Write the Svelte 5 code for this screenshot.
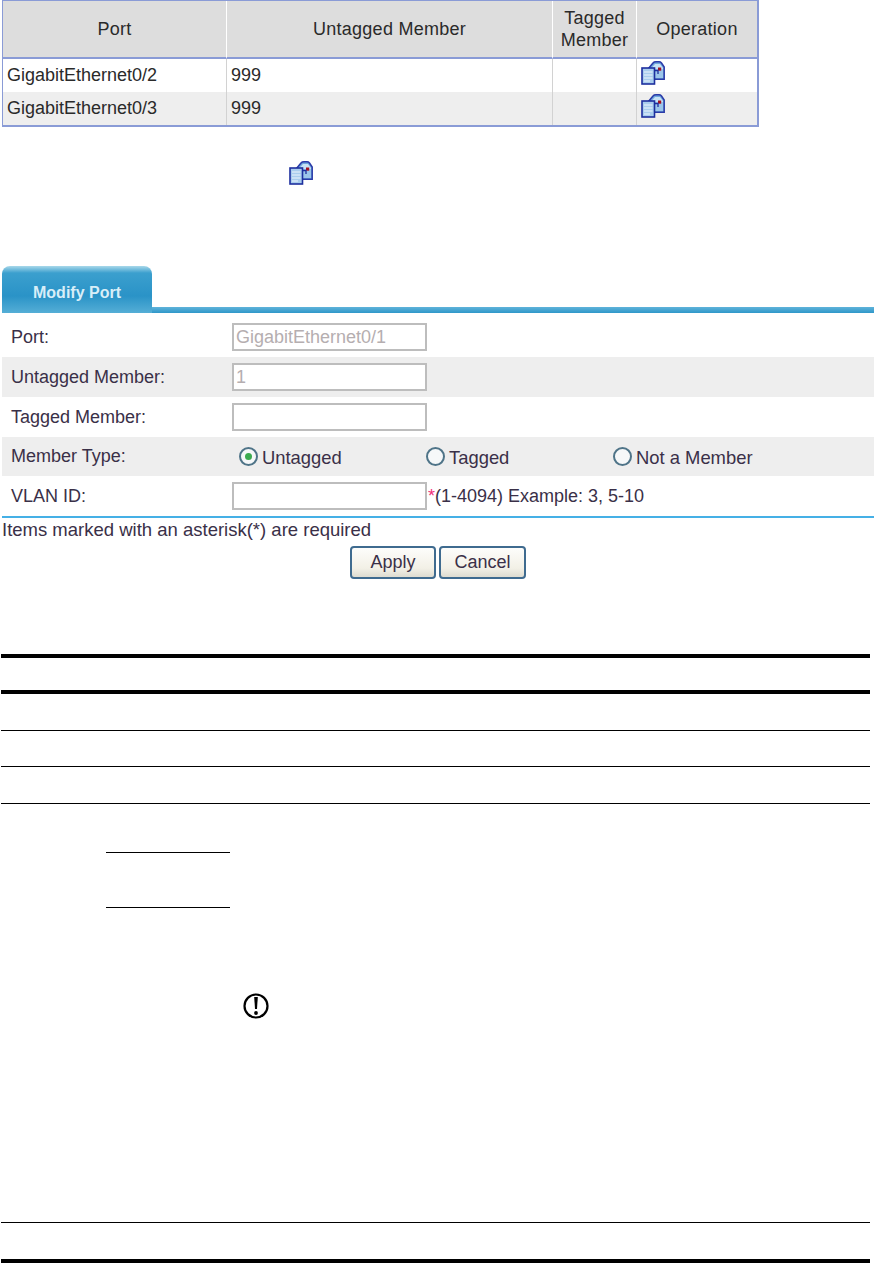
<script>
  const ports = ['GigabitEthernet0/2', 'GigabitEthernet0/3'];
  const types = [
    { label: 'Untagged', checked: true },
    { label: 'Tagged', checked: false },
    { label: 'Not a Member', checked: false }
  ];
  const ruleGaps = [32, 36, 35, 36];
</script>

{#snippet opIcon()}
  <svg class="op-icon" width="24" height="24" viewBox="0 0 24 24">
    <path d="M7 8 L12 2 Q13 .8 15 .8 H18 Q19.5 .8 20.5 2 L23.2 6 V18.2 H12 V8 Z" fill="#6ea6dc" stroke="#2a3aa8" stroke-width="1.5"/>
    <path d="M10 7.5 L14 3 H19 L22 7 V8 H10 Z" fill="#c6e2f5"/>
    <rect x="10" y="8" width="12" height="9" fill="#9cc6ea"/>
    <rect x="17" y="6.5" width="3.2" height="3.2" fill="#a80f1e"/>
    <rect x="1" y="7" width="12.5" height="16" fill="#a9cdee" stroke="#1d2f9e" stroke-width="1.6"/>
    <path d="M3 11h8.500M3 14h8.500M3 17h8.500M3 20h6" stroke="#eef6fc" stroke-width="1.2"/>
    <path d="M13.500 9.500h3.500v3.500" fill="none" stroke="#1d2f9e" stroke-width="1.3"/>
  </svg>
{/snippet}

<div class="page">
  <table class="ports">
    <thead>
      <tr>
        <th class="c1">Port</th>
        <th class="c2">Untagged Member</th>
        <th class="c3">Tagged Member</th>
        <th class="c4">Operation</th>
      </tr>
    </thead>
    <tbody>
      {#each ports as port}
        <tr>
          <td>{port}</td>
          <td>999</td>
          <td></td>
          <td class="op">{@render opIcon()}</td>
        </tr>
      {/each}
    </tbody>
  </table>

  <div class="inline-icon">{@render opIcon()}</div>

  <div class="tabbar">
    <div class="tab">Modify Port</div>
  </div>

  <div class="form">
    <div class="row">
      <span class="label">Port:</span>
      <span class="input disabled">GigabitEthernet0/1</span>
    </div>
    <div class="row alt">
      <span class="label">Untagged Member:</span>
      <span class="input disabled">1</span>
    </div>
    <div class="row">
      <span class="label">Tagged Member:</span>
      <span class="input"></span>
    </div>
    <div class="row alt short">
      <span class="label">Member Type:</span>
      <div class="radios">
        {#each types as t}
          <span class="radio-item">
            <span class="radio" class:checked={t.checked}></span><span class="radio-text">{t.label}</span>
          </span>
        {/each}
      </div>
    </div>
    <div class="row">
      <span class="label">VLAN ID:</span>
      <span class="input"></span>
      <span class="hint"><span class="star">*</span>(1-4094) Example: 3, 5-10</span>
    </div>
  </div>

  <div class="required">Items marked with an asterisk(*) are required</div>

  <div class="buttons">
    <button class="apply">Apply</button>
    <button class="cancel">Cancel</button>
  </div>

  <div class="doc-table">
    <div class="rule thick"></div>
    {#each ruleGaps as gap, i}
      <div style="height: {gap}px"></div>
      <div class="rule" class:thick={i === 0}></div>
    {/each}
  </div>

  <div class="short-rule first"></div>
  <div class="short-rule second"></div>

  <div class="notice">
    <svg width="26" height="26" viewBox="0 0 26 26">
      <circle cx="13" cy="13" r="11.5" fill="#fff" stroke="#000" stroke-width="2.2"/>
      <path d="M11.200 4 H14.800 L14 16 H12 Z" fill="#000"/>
      <circle cx="13" cy="20" r="1.900" fill="#000"/>
    </svg>
  </div>

  <div class="end-table">
    <div class="rule"></div>
    <div class="end-gap"></div>
    <div class="rule thick"></div>
  </div>
</div>

<style>
  :global(body) {
    margin: 0;
    background: #fff;
  }

  .page {
    width: 874px;
    height: 1263px;
    overflow: hidden;
    font-family: "Liberation Sans", Arial, sans-serif;
    font-size: 18px;
    color: #333;
    box-sizing: border-box;
  }

  .ports {
    width: 757px;
    margin-left: 2px;
    border-collapse: separate;
    border-spacing: 0;
    border: 2px solid #8a9bd6;
    border-top-width: 1px;
    border-left-width: 1px;
    table-layout: fixed;
    color: #2a2a2a;
  }

  .ports th {
    height: 56px;
    padding: 0;
    background: #dddddd;
    font-weight: normal;
    line-height: 22px;
    letter-spacing: 0.25px;
    border-right: 1px solid #fff;
    border-bottom: 2px solid #8a9bd6;
  }

  .ports td {
    height: 33px;
    padding: 0 0 0 4px;
    border-right: 1px solid #d2d2d2;
    white-space: nowrap;
  }

  .ports td.op {
    vertical-align: top;
    padding-top: 2px;
    height: 31px;
  }

  .ports th:last-child,
  .ports td:last-child {
    border-right: none;
  }

  .ports tbody tr:nth-child(2) td {
    background: #eeeeee;
  }

  .c1 { width: 223px; }
  .c2 { width: 325px; }
  .c3 { width: 83px; }

  .op-icon {
    display: block;
  }

  .inline-icon {
    margin: 34px 0 0 289px;
    height: 24px;
  }

  .tabbar {
    margin: 81px 0 0 2px;
    height: 47px;
    display: flex;
    align-items: flex-end;
    background: linear-gradient(#fff, #fff 41px, #5fb3da 41px, #2f97c9 47px);
  }

  .tab {
    width: 150px;
    height: 47px;
    box-sizing: border-box;
    padding-top: 18px;
    text-align: center;
    font-size: 16px;
    font-weight: bold;
    color: #d8eef8;
    border-radius: 8px 8px 0 0;
    background: linear-gradient(#a8d8ea, #3b9fce 7px, #2a93c7 30px, #55aed6);
  }

  .form {
    margin: 4px 0 0 2px;
    border-bottom: 2px solid #45b0e6;
  }

  .row {
    display: flex;
    align-items: center;
    height: 40px;
    color: #3a3048;
  }

  .row.alt {
    background: #eeeeee;
  }

  .row.short {
    height: 39px;
  }

  .label {
    width: 230px;
    padding-left: 9px;
    box-sizing: border-box;
  }

  .input {
    width: 195px;
    height: 28px;
    box-sizing: border-box;
    border: 2px solid #bdbdbd;
    background: #fff;
    padding-left: 2px;
    line-height: 24px;
    white-space: nowrap;
  }

  .input.disabled {
    color: #b5aeb0;
  }

  .radios {
    display: flex;
    margin-left: 7px;
  }

  .radio-item {
    display: flex;
    align-items: center;
    width: 187px;
  }

  .radio {
    width: 19px;
    height: 19px;
    margin-right: 4px;
    box-sizing: border-box;
    border-radius: 50%;
    border: 2px solid #4f7488;
    background: #f6f8f9;
    display: flex;
    align-items: center;
    justify-content: center;
  }

  .radio-text {
    padding-top: 3px;
    font-size: 18.4px;
  }

  .radio.checked::after {
    content: "";
    width: 7px;
    height: 7px;
    border-radius: 50%;
    background: #3cab50;
  }

  .hint {
    margin-left: 1px;
  }

  .star {
    color: #f0307a;
  }

  .required {
    margin-top: 1px;
    height: 22px;
    line-height: 22px;
    padding-left: 2px;
    font-size: 18.5px;
    color: #3a3048;
    white-space: nowrap;
  }

  .buttons {
    margin-top: 5px;
    padding-left: 350px;
    display: flex;
    gap: 3px;
  }

  .buttons button {
    height: 33px;
    padding: 0;
    font-family: inherit;
    font-size: 18px;
    color: #3a3048;
    border: 2px solid #3f6b8f;
    border-radius: 4px;
    background: linear-gradient(#fdfdfb, #f2f0e6 70%, #dedcd0);
  }

  .apply { width: 86px; }
  .cancel { width: 87px; }

  .doc-table {
    margin: 75px 4px 0 1px;
  }

  .rule {
    height: 1px;
    background: #000;
  }

  .rule.thick {
    height: 4px;
  }

  .short-rule {
    width: 124px;
    height: 1px;
    margin-left: 106px;
    background: #000;
  }

  .short-rule.first { margin-top: 48px; }
  .short-rule.second { margin-top: 54px; }

  .notice {
    margin: 85px 0 0 243px;
    height: 26px;
  }

  .end-table {
    margin: 203px 4px 0 1px;
  }

  .end-gap {
    height: 36px;
  }
</style>
